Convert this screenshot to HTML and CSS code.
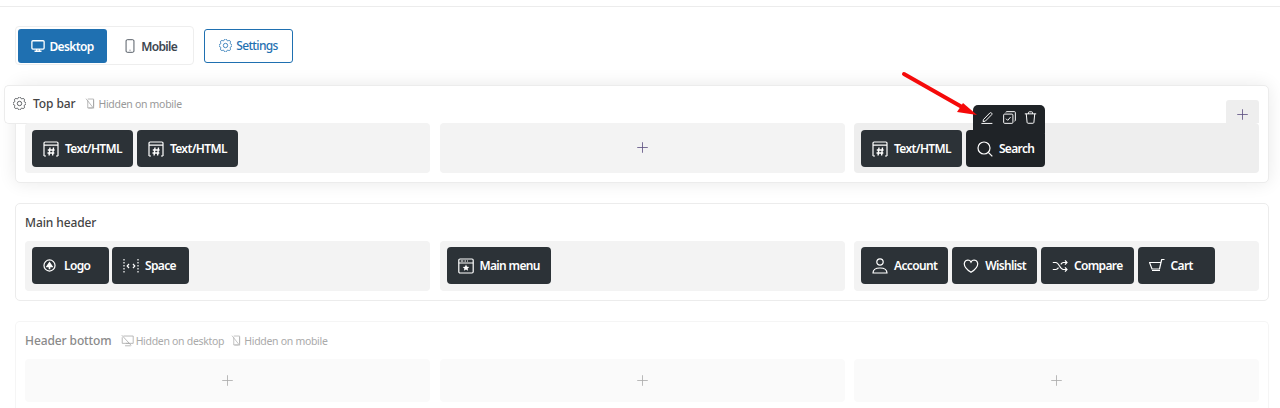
FILE: index.html
```html
<!DOCTYPE html>
<html lang="en">
<head>
<meta charset="utf-8">
<title>Header builder</title>
<link rel="stylesheet" href="styles.css">
</head>
<body>
<svg class="sprite" xmlns="http://www.w3.org/2000/svg">
  <defs>
    <symbol id="i-display" viewBox="0 0 16 16"><rect x="1" y="2" width="14" height="9.5" rx="1.2"/><path d="M6.5 11.5v2.3M9.5 11.5v2.3M4 14h8"/></symbol>
    <symbol id="i-phone" viewBox="0 0 16 16"><rect x="3.5" y=".8" width="9" height="14.4" rx="1.4"/><path d="M7.5 12.8h1"/></symbol>
    <symbol id="i-gear" viewBox="0 0 16 16"><circle cx="8" cy="8" r="2.7"/><path d="M9.796 1.343c-.527-1.79-3.065-1.79-3.592 0l-.094.319a.873.873 0 0 1-1.255.52l-.292-.16c-1.64-.892-3.433.902-2.54 2.541l.159.292a.873.873 0 0 1-.52 1.255l-.319.094c-1.79.527-1.79 3.065 0 3.592l.319.094a.873.873 0 0 1 .52 1.255l-.16.292c-.892 1.64.901 3.434 2.541 2.54l.292-.159a.873.873 0 0 1 1.255.52l.094.319c.527 1.79 3.065 1.79 3.592 0l.094-.319a.873.873 0 0 1 1.255-.52l.292.16c1.64.893 3.434-.902 2.54-2.541l-.159-.292a.873.873 0 0 1 .52-1.255l.319-.094c1.79-.527 1.79-3.065 0-3.592l-.319-.094a.873.873 0 0 1-.52-1.255l.16-.292c.893-1.64-.902-3.433-2.541-2.54l-.292.159a.873.873 0 0 1-1.255-.52l-.094-.319z"/></symbol>
    <symbol id="i-nomobile" viewBox="0 0 16 16"><path d="M4 3.5v11h8.5V3M4 1.5h8.5v11M1.5 1l11 14M5 14.5h6"/></symbol>
    <symbol id="i-nodesktop" viewBox="0 0 16 16"><path d="M3 2.5h12v9H6M1.5 4v7.5h9M1 1.500l11.500 12.500M5 14.500h7"/></symbol>
    <symbol id="i-html" viewBox="0 0 16 16"><path d="M1 15V2.200A1.200 1.200 0 0 1 2.200 1h11.600A1.200 1.200 0 0 1 15 2.200V15M1 4.200h14M1 15h2M13 15h2"/><path class="hash" d="M7 6.500l-.9 8M10.500 6.500l-.9 8M4.800 9h6.800M4.500 12h6.800"/></symbol>
    <symbol id="i-plus" viewBox="0 0 16 16"><path d="M8 1.500v13M1.500 8h13"/></symbol>
    <symbol id="i-search" viewBox="0 0 16 16"><circle cx="7" cy="7" r="6"/><path d="M11.300 11.300l4 4"/></symbol>
    <symbol id="i-logo" viewBox="0 0 16 16"><circle cx="8" cy="8" r="6.800"/><path class="solid" d="M8 3l4.800 7.200H9v2.300H7v-2.300H3.200z"/></symbol>
    <symbol id="i-space" viewBox="0 0 16 16"><path d="M1 1v1.500M1 4v1.500M1 7v1.500M1 10v1.500M1 13v1.500M15 1v1.500M15 4v1.500M15 7v1.500M15 10v1.500M15 13v1.500M6 6L4.200 8 6 10M10 6l1.800 2L10 10"/></symbol>
    <symbol id="i-menu" viewBox="0 0 16 16"><rect x=".8" y="1" width="14.400" height="14" rx="1.200"/><path d="M.8 5h14.400M2.800 3h2.500M6.500 3h1.500M9 3h1"/><path class="solid" d="M8 6.500l1 2.200 2.300.2-1.700 1.600.5 2.300-2.100-1.200-2.100 1.200.5-2.300-1.700-1.600 2.300-.2z"/></symbol>
    <symbol id="i-person" viewBox="0 0 16 16"><circle cx="8" cy="4" r="3.200"/><path d="M1 15c0-3.500 3-5 7-5s7 1.500 7 5z"/></symbol>
    <symbol id="i-heart" viewBox="0 0 16 16"><path d="M8 14.300C-3 7.300 2 .8 6 2.300c1 .4 1.600 1.100 2 1.900.4-.8 1-1.500 2-1.900 4-1.500 9 5-2 12z"/></symbol>
    <symbol id="i-shuffle" viewBox="0 0 16 16"><path d="M.8 4.500h3c3.500 0 4 7 7.500 7h3.500M.8 11.500h3c1.200 0 2-.8 2.700-1.800M8.800 6.300c.7-1 1.400-1.800 2.500-1.800h3.500M13 2.300l2 2.200-2 2.200M13 9.300l2 2.200-2 2.200"/></symbol>
    <symbol id="i-cart" viewBox="0 0 16 16"><path d="M.5 4.500h11.500l-1.500 6.500H3zM12 4.500l.7-3h2.800M5 14.200v.1M10 14.200v.1M3 12.500h8"/></symbol>
    <symbol id="i-pencil" viewBox="0 0 16 16"><path d="M3 10.500L10.800 2.500c.7-.7 1.600-.6 2.200 0s.7 1.500 0 2.200L5.300 12.500 2.500 13zM.5 15.300h13.500"/></symbol>
    <symbol id="i-copy" viewBox="0 0 16 16"><rect x=".8" y="3.800" width="11.400" height="11.400" rx="1.200"/><path d="M3.500 1.800c0-.6.400-1 1-1h9.700c.6 0 1 .4 1 1v9.700c0 .6-.4 1-1 1M3.800 9.500l2 2 3.500-4"/></symbol>
    <symbol id="i-trash" viewBox="0 0 16 16"><path d="M1 3.500h14M5.500 3.500V2c0-.6.400-1 1-1h3c.6 0 1 .4 1 1v1.500M2.800 3.500l1 10.500c.1.700.5 1.100 1.200 1.100h6c.7 0 1.100-.4 1.200-1.100l1-10.500"/></symbol>
  </defs>
</svg>

<div class="topline"></div>
<main class="page">
  <div class="toolbar">
    <div class="tabs">
      <button class="tab tab-active"><svg class="icon ic-14 sturdy"><use href="#i-display"/></svg>Desktop</button>
      <button class="tab"><svg class="icon ic-14"><use href="#i-phone"/></svg>Mobile</button>
    </div>
    <button class="settings"><svg class="icon ic-13"><use href="#i-gear"/></svg>Settings</button>
  </div>

  <section class="row row-floating">
    <div class="head head-floating">
      <svg class="icon ic-13 head-gear"><use href="#i-gear"/></svg>
      <span class="head-title">Top bar</span>
      <span class="note"><svg class="icon ic-11"><use href="#i-nomobile"/></svg>Hidden on mobile</span>
    </div>
    <button class="add-tab" aria-label="Add"><svg class="icon ic-13 plus-ic"><use href="#i-plus"/></svg></button>
    <div class="cols cols-first">
      <div class="col">
        <div class="block"><svg class="icon ic-16"><use href="#i-html"/></svg>Text/HTML</div>
        <div class="block"><svg class="icon ic-16"><use href="#i-html"/></svg>Text/HTML</div>
      </div>
      <div class="col col-empty"><svg class="icon ic-13 plus-ic"><use href="#i-plus"/></svg></div>
      <div class="col col-hover">
        <div class="block"><svg class="icon ic-16"><use href="#i-html"/></svg>Text/HTML</div>
        <div class="block block-hover">
          <div class="popup">
            <svg class="icon ic-12"><use href="#i-pencil"/></svg>
            <svg class="icon ic-12"><use href="#i-copy"/></svg>
            <svg class="icon ic-12"><use href="#i-trash"/></svg>
          </div>
          <svg class="icon ic-16"><use href="#i-search"/></svg>Search
        </div>
      </div>
    </div>
  </section>

  <section class="row">
    <div class="head"><span class="head-title">Main header</span></div>
    <div class="cols">
      <div class="col">
        <div class="block block-min"><svg class="icon ic-13 sturdy"><use href="#i-logo"/></svg><span class="label-logo">Logo</span></div>
        <div class="block block-min block-tight"><svg class="icon ic-15"><use href="#i-space"/></svg>Space</div>
      </div>
      <div class="col">
        <div class="block"><svg class="icon ic-15"><use href="#i-menu"/></svg>Main menu</div>
      </div>
      <div class="col">
        <div class="block"><svg class="icon ic-15"><use href="#i-person"/></svg>Account</div>
        <div class="block"><svg class="icon ic-15"><use href="#i-heart"/></svg>Wishlist</div>
        <div class="block"><svg class="icon ic-15"><use href="#i-shuffle"/></svg>Compare</div>
        <div class="block block-min"><svg class="icon ic-15"><use href="#i-cart"/></svg>Cart</div>
      </div>
    </div>
  </section>

  <section class="row row-muted">
    <div class="head">
      <span class="head-title">Header bottom</span>
      <span class="note note-first"><svg class="icon ic-12"><use href="#i-nodesktop"/></svg>Hidden on desktop</span>
      <span class="note note-second"><svg class="icon ic-11"><use href="#i-nomobile"/></svg>Hidden on mobile</span>
    </div>
    <div class="cols">
      <div class="col col-empty"><svg class="icon ic-13 plus-ic"><use href="#i-plus"/></svg></div>
      <div class="col col-empty"><svg class="icon ic-13 plus-ic"><use href="#i-plus"/></svg></div>
      <div class="col col-empty"><svg class="icon ic-13 plus-ic"><use href="#i-plus"/></svg></div>
    </div>
  </section>
</main>

<svg class="arrow" viewBox="0 0 90 60" xmlns="http://www.w3.org/2000/svg">
  <path class="arrow-line" d="M2 2L60 35"/>
  <path class="arrow-head" d="M75 43L61 31 55 40z"/>
</svg>
</body>
</html>
```
FILE: styles.css
```css
* { box-sizing: border-box; }
html, body { margin: 0; padding: 0; height: 408px; overflow: hidden; background: #fff; }
body { font-family: "Noto Sans", "Open Sans", Arial, sans-serif; font-size: 12px; color: #3f4347; position: relative; }
.sprite { position: absolute; width: 0; height: 0; }
.icon { fill: none; stroke: currentColor; stroke-width: 1; flex: none; display: block; }
.solid { fill: currentColor; stroke: none; }
.hash { stroke-width: 1.4; }
.ic-11 { width: 11px; height: 11px; }
.ic-12 { width: 13px; height: 13px; }
.ic-13 { width: 13px; height: 13px; }
.ic-14 { width: 14px; height: 14px; }
.ic-15 { width: 16px; height: 16px; }
.ic-16 { width: 16px; height: 16px; }
.sturdy { stroke-width: 1.5; }

.topline { height: 7px; border-bottom: 1px solid #ececec; }
.page { padding: 19px 11px 0 15px; }

.toolbar { display: flex; gap: 10px; align-items: center; height: 39px; }
.tabs { display: flex; border: 1px solid #eee; border-radius: 4px; padding: 2px; height: 39px; width: 179px; }
.tab, .settings { font: inherit; font-size: 12px; font-weight: 600; letter-spacing: -.65px; display: flex; align-items: center; justify-content: center; height: 34px; background: #fff; color: #3d4650; border: 0; border-radius: 3px; padding: 0; }
.tab { flex: none; width: 84px; gap: 4.5px; padding-left: 2px; }
.tab-active { width: 89px; background: #1f70b1; color: #fff; gap: 4px; padding-left: 0; }
.settings { width: 89px; border: 1px solid #1f70b1; color: #1f70b1; font-weight: 500; gap: 4px; }

.row { position: relative; margin-top: 20px; border: 1px solid #ececec; border-radius: 5px; padding: 0 9px 9px; background: #fff; height: 98px; }
.row-floating { box-shadow: 0 0 18px rgba(0, 0, 0, .09); padding-top: 37px; }
.row-muted { height: 87px; border-color: #f5f5f5; border-bottom: 0; border-radius: 5px 5px 0 0; padding-bottom: 0; }

.head { height: 37px; display: flex; align-items: center; }
.head-title { font-weight: 500; letter-spacing: -.1px; color: #444; }
.head-floating { position: absolute; left: -12px; top: -1px; height: 39px; width: 200px; padding: 0 0 2px 8px; background: #fff; border: 1px solid #ececec; border-right: 0; border-radius: 5px 0 0 5px; }
.head-gear { margin-right: 7px; }
.note { display: flex; align-items: center; gap: 2px; font-size: 10.5px; letter-spacing: -.3px; color: #999; margin-left: 10px; }
.note-first { margin-left: 9px; }
.note-second { margin-left: 7px; }
.row-muted .head-title { color: #8a8a8a; }
.row-muted .note { color: #aaa; }
.row-muted .plus-ic { color: #aaa; }
.row-muted .col { background: #fafafa; min-height: 43px; }

.add-tab { position: absolute; z-index: 1; right: 9px; top: 14px; width: 33px; height: 23px; padding: 6px 0 0; border: 0; border-radius: 3px 3px 0 0; background: #eee; display: flex; align-items: center; justify-content: center; }
.plus-ic { color: #5c4f80; }

.cols { display: grid; grid-template-columns: repeat(3, 1fr); gap: 9.5px; }
.cols-first { position: relative; z-index: 2; }
.col { display: flex; gap: 4px; padding: 6px 7px 7px; background: #f3f3f3; border-radius: 4px; min-height: 44px; }
.cols-first .col { padding: 7px 7px 6px; }
.col-hover { background: #eee; }
.col-empty { align-items: center; justify-content: center; padding: 0; }
.cols-first .col-empty { padding: 0 0 2px; }

.block { position: relative; display: flex; align-items: center; gap: 6px; height: 37px; padding: 0 11px; background: #2c3237; color: #fff; font-size: 12px; font-weight: 600; letter-spacing: -.65px; border-radius: 4px; }
.block .icon { stroke-width: 1.2; }
.block .sturdy { stroke-width: 1.5; }
.block-min { min-width: 77px; }
.block-tight { margin-left: -1px; }
.block-hover { background: #1f2327; }
.label-logo { margin-left: 2px; }
.popup { position: absolute; right: 0; top: -25px; width: 72px; height: 28px; padding: 6px 8px 0; background: #1f2327; border-radius: 5px 5px 0 0; display: flex; justify-content: space-between; align-items: flex-start; }

.arrow { position: absolute; left: 902px; top: 72px; width: 90px; height: 60px; overflow: visible; z-index: 5; }
.arrow-line { fill: none; stroke: #f50a0a; stroke-width: 4; stroke-linecap: round; }
.arrow-head { fill: #f50a0a; }
```
